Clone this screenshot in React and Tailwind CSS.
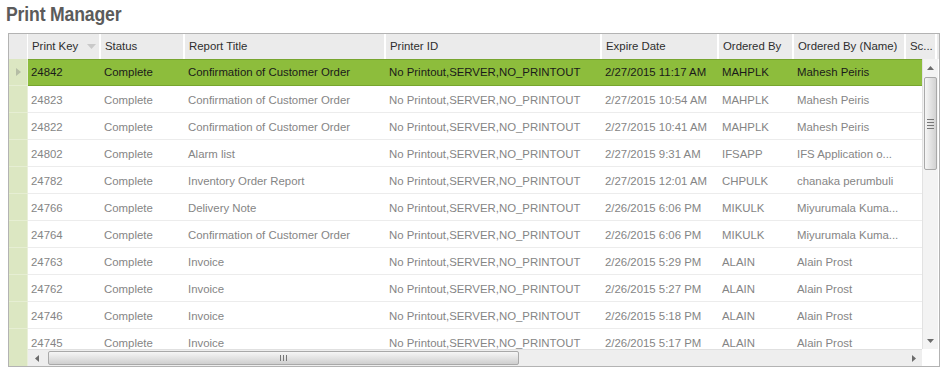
import React from "react";

const cols = [
  { key: "key", label: "Print Key", w: 73 },
  { key: "status", label: "Status", w: 84 },
  { key: "title", label: "Report Title", w: 201 },
  { key: "printer", label: "Printer ID", w: 216 },
  { key: "expire", label: "Expire Date", w: 117 },
  { key: "by", label: "Ordered By", w: 75 },
  { key: "name", label: "Ordered By (Name)", w: 112 },
  { key: "sc", label: "Sc...", w: 31 },
];

const P = "No Printout,SERVER,NO_PRINTOUT";
const C = "Confirmation of Customer Order";
const rows = [
  ["24842", "Complete", C, P, "2/27/2015 11:17 AM", "MAHPLK", "Mahesh Peiris"],
  ["24823", "Complete", C, P, "2/27/2015 10:54 AM", "MAHPLK", "Mahesh Peiris"],
  ["24822", "Complete", C, P, "2/27/2015 10:41 AM", "MAHPLK", "Mahesh Peiris"],
  ["24802", "Complete", "Alarm list", P, "2/27/2015 9:31 AM", "IFSAPP", "IFS Application o..."],
  ["24782", "Complete", "Inventory Order Report", P, "2/27/2015 12:01 AM", "CHPULK", "chanaka perumbuli"],
  ["24766", "Complete", "Delivery Note", P, "2/26/2015 6:06 PM", "MIKULK", "Miyurumala Kuma..."],
  ["24764", "Complete", C, P, "2/26/2015 6:06 PM", "MIKULK", "Miyurumala Kuma..."],
  ["24763", "Complete", "Invoice", P, "2/26/2015 5:29 PM", "ALAIN", "Alain Prost"],
  ["24762", "Complete", "Invoice", P, "2/26/2015 5:27 PM", "ALAIN", "Alain Prost"],
  ["24746", "Complete", "Invoice", P, "2/26/2015 5:18 PM", "ALAIN", "Alain Prost"],
  ["24745", "Complete", "Invoice", P, "2/26/2015 5:17 PM", "ALAIN", "Alain Prost"],
];

const widthCls = {
  key: "w-[73px]",
  status: "w-[84px]",
  title: "w-[201px]",
  printer: "w-[216px]",
  expire: "w-[117px]",
  by: "w-[75px]",
  name: "w-[112px]",
  sc: "w-[31px]",
};

export default function App() {
  return (
    <div className="w-[947px] h-[368px] bg-white overflow-hidden font-['Liberation_Sans',Arial,sans-serif] text-[11.4px]">
      <div className="h-[33px] pl-[6px] pt-[2px]">
        <span className="inline-block origin-left scale-x-[0.84] font-['Liberation_Sans',Arial,sans-serif] font-bold text-[21px] leading-[24px] text-[#5b5b5b] tracking-[-0.2px]">
          Print Manager
        </span>
      </div>
      <div className="ml-[8px] w-[932px] h-[334px] border border-[#b3b3b3] flex flex-col">
        {/* header */}
        <div className="h-[25px] flex bg-[#ebebeb] text-[#2e2e2e]">
          <div className="w-[19px] shrink-0 border-r border-white" />
          {cols.map((c) => (
            <div
              key={c.key}
              className={`${widthCls[c.key]} shrink-0 flex items-center pl-[4px] pt-[1px] border-r-2 border-white relative whitespace-nowrap overflow-hidden`}
            >
              {c.label}
              {c.key === "key" && (
                <svg className="absolute right-[3px] top-[10px]" width="9" height="5" viewBox="0 0 9 5">
                  <path d="M0 0 L9 0 L4.5 5 Z" fill="#c9c9c9" />
                </svg>
              )}
            </div>
          ))}
        </div>
        {/* body */}
        <div className="h-[290px] flex">
          <div className="w-[19px] shrink-0 bg-[#dce7c2] flex flex-col border-r border-[#e9efd9]">
            {rows.map((r, i) => (
              <div key={i} className="h-[27px] shrink-0 border-b border-[#e6eed3] flex items-center justify-center">
                {i === 0 && (
                  <svg width="5" height="8" viewBox="0 0 5 8">
                    <path d="M0 0 L5 4 L0 8 Z" fill="#b5bda5" />
                  </svg>
                )}
              </div>
            ))}
          </div>
          <div className="w-[894px] shrink-0 overflow-hidden flex flex-col">
            {rows.map((r, i) => {
              const sel = i === 0;
              return (
                <div
                  key={i}
                  className={
                    sel
                      ? "h-[27px] shrink-0 flex bg-[#8dbd3c] border-y border-[#77a52e] text-[#1a1a1a] pt-[1px]"
                      : "h-[27px] shrink-0 flex border-b border-[#ececec] text-[#858585] pt-[3px]"
                  }
                >
                  {cols.map((c, j) => (
                    <div
                      key={c.key}
                      className={`${widthCls[c.key]} shrink-0 flex items-center pl-[3px] whitespace-nowrap overflow-hidden`}
                    >
                      {j < 7 ? r[j] : ""}
                    </div>
                  ))}
                </div>
              );
            })}
          </div>
          {/* vertical scrollbar */}
          <div className="w-[16px] shrink-0 bg-[#f3f3f3] flex flex-col items-center border-l border-[#e2e2e2]">
            <div className="h-[17px] flex items-center justify-center">
              <svg width="7" height="4" viewBox="0 0 7 4">
                <path d="M0 4 L3.5 0 L7 4 Z" fill="#6b6b6b" />
              </svg>
            </div>
            <div className="w-[13px] h-[93px] mt-[1px] rounded-[2px] border border-[#a9a9a9] bg-gradient-to-r from-[#f6f6f6] via-[#e3e3e3] to-[#d2d2d2] flex flex-col items-center justify-center gap-[2px]">
              <div className="w-[7px] h-px bg-[#777]" />
              <div className="w-[7px] h-px bg-[#777]" />
              <div className="w-[7px] h-px bg-[#777]" />
              <div className="w-[7px] h-px bg-[#777]" />
            </div>
            <div className="flex-1" />
            <div className="h-[17px] flex items-center justify-center">
              <svg width="7" height="4" viewBox="0 0 7 4">
                <path d="M0 0 L7 0 L3.5 4 Z" fill="#6b6b6b" />
              </svg>
            </div>
          </div>
          <div className="flex-1 bg-white" />
        </div>
        {/* bottom */}
        <div className="h-[17px] flex">
          <div className="w-[19px] shrink-0 bg-[#dce7c2] border-r border-[#e9efd9]" />
          <div className="w-[894px] shrink-0 bg-[#eeeeee] border-t border-[#e0e0e0] flex items-center">
            <div className="w-[17px] h-full flex items-center justify-center">
              <svg width="4" height="7" viewBox="0 0 4 7">
                <path d="M4 0 L0 3.5 L4 7 Z" fill="#6b6b6b" />
              </svg>
            </div>
            <div className="w-[471px] h-[14px] ml-[3px] rounded-[2px] border border-[#a9a9a9] bg-gradient-to-b from-[#f6f6f6] via-[#e3e3e3] to-[#cfcfcf] flex items-center justify-center gap-[2px]">
              <div className="w-px h-[6px] bg-[#777]" />
              <div className="w-px h-[6px] bg-[#777]" />
              <div className="w-px h-[6px] bg-[#777]" />
            </div>
            <div className="flex-1" />
            <div className="w-[17px] h-full flex items-center justify-center">
              <svg width="4" height="7" viewBox="0 0 4 7">
                <path d="M0 0 L4 3.5 L0 7 Z" fill="#6b6b6b" />
              </svg>
            </div>
          </div>
          <div className="flex-1 bg-white" />
        </div>
      </div>
    </div>
  );
}
